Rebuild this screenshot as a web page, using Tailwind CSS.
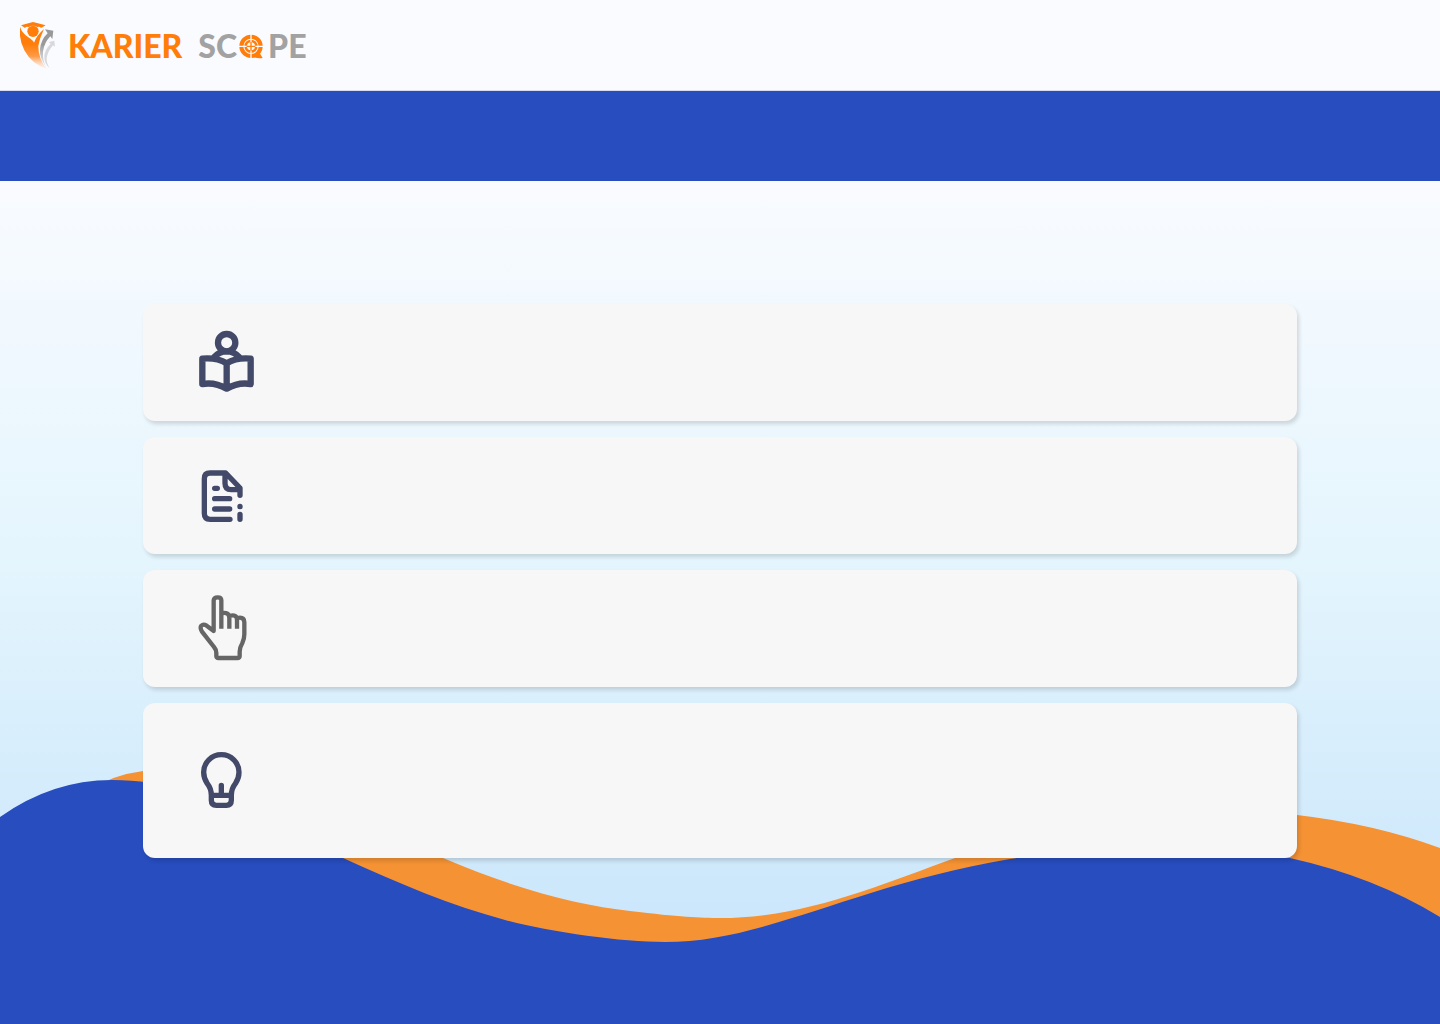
<!DOCTYPE html>
<html lang="en">
<head>
<meta charset="utf-8">
<meta name="viewport" content="width=device-width, initial-scale=1">
<title>Karier Scope</title>
<script src="https://cdn.jsdelivr.net/npm/@tailwindcss/browser@4"></script>
</head>
<body class="flex min-h-screen flex-col bg-[#f9fbff] font-['Lato',sans-serif]">
<header class="flex h-[91px] items-center border-b border-[#d5dcf0] px-5">
  <a href="#" aria-label="Karier Scope" class="flex items-center gap-3">
    <svg class="h-[50px] w-9" viewBox="30 30 108 150" aria-hidden="true">
      <defs>
        <linearGradient id="body" x1="0" y1="0" x2="0" y2="1"><stop offset=".4" stop-color="#ff7d08"/><stop offset=".7" stop-color="#ff9a45"/><stop offset="1" stop-color="#ffd9bb" stop-opacity=".2"/></linearGradient>
        <linearGradient id="arrow" x1="0" y1="0" x2="0" y2="1"><stop offset=".4" stop-color="#999"/><stop offset="1" stop-color="#ccc" stop-opacity=".4"/></linearGradient>
      </defs>
      <path d="M33 46 69 36 107 46 93 54 Q89 48 82 51 Q69 44 56 51 Q48 48 45 54Z" fill="#ff7d08"/>
      <circle cx="69" cy="64" r="17" fill="#ff7d08"/>
      <path d="M30 50 Q35 68 55 82 Q70 92 72 98 Q80 76 102 57 Q89 84 85 107 Q84 145 110 177 Q65 162 43 121 Q26 87 30 50Z" fill="url(#body)"/>
      <path d="M105 58 130 62 127 87 121 79 Q102 99 99 125 Q97 150 109 172 Q88 145 90 118 Q93 88 113 70Z" fill="url(#arrow)"/>
      <path d="M117 96 133 92 135 110 129 106 Q112 126 110 145 Q109 159 119 175 Q103 160 103 142 Q103 119 122 102Z" fill="#d8d8da"/>
    </svg>
    <span class="flex items-center pt-0.5 text-[32px] leading-8 font-black text-[#ff7d08]">
      <span>KARIER</span>
      <span class="ml-4 text-[#a2a2a2]">SC</span>
      <svg class="ml-0.5 h-[25px] w-[25px]" viewBox="0 0 75 75" fill="none" aria-hidden="true">
        <circle cx="36" cy="37" r="29" stroke="#ff7d08" stroke-width="12"/>
        <path d="M58 50 71 72 Q56 74 43 69Z" fill="#ff7d08"/>
        <circle cx="36" cy="37" r="16" stroke="#ff7d08" stroke-width="8"/>
        <path d="M36 0V75M0 37H75" stroke="#f9fbff" stroke-width="4"/>
        <path d="M36 24V50M23 37H49" stroke="#ff7d08" stroke-width="4"/>
      </svg>
      <span class="ml-1 text-[#a2a2a2]">PE</span>
    </span>
  </a>
</header>
<div class="h-[90px] bg-[#274dbf]"></div>
<main class="relative isolate flex-1 bg-linear-to-b from-[#f9fbff] via-[#e4f5fd] via-45% to-[#cae6fb] to-90% px-[143px] pt-[123px] pb-[166px]">
  <svg class="absolute inset-x-0 bottom-0 -z-10 h-[274px] w-full" viewBox="0 750 1440 274" preserveAspectRatio="none" aria-hidden="true">
    <path d="M90 790 Q112 775 143 771 C260 752 340 815 443 858 C520 891 580 905 630 911 C680 917 700 918 720 918 C805 918 880 885 955 858 C1070 810 1190 806 1297 815 Q1375 824 1440 848 V1024H90Z" fill="#f59234"/>
    <path d="M0 817 Q52 780 112 780 C190 780 240 810 343 858 C400 884 450 905 505 920 C550 932 620 942 665 942 C765 942 855 885 1010 859 C1110 842 1210 842 1290 858 Q1375 877 1440 917 V1024H0Z" fill="#274dbf"/>
  </svg>
  <div class="flex flex-col gap-4">
    <section class="flex h-[117px] items-center rounded-xl bg-[#f7f7f7] pl-[55px] shadow-[2px_3px_4px_rgba(0,0,0,0.14)]">
      <svg class="h-[69px] w-14" viewBox="24 24 168 207" fill="none" stroke="#434968" stroke-width="19" stroke-linejoin="round" aria-hidden="true">
        <circle cx="110" cy="68" r="26"/>
        <path d="M72 112Q87 94 110 94T148 112M110 130Q80 112 37 116V192Q76 186 110 206Q144 186 182 192V116Q140 112 110 130V206"/>
      </svg>
    </section>
    <section class="flex h-[117px] items-center rounded-xl bg-[#f7f7f7] pl-[55px] shadow-[2px_3px_4px_rgba(0,0,0,0.14)]">
      <svg class="h-[69px] w-14" viewBox="24 3 168 207" fill="none" stroke="#434968" stroke-width="16" stroke-linecap="round" stroke-linejoin="round" aria-hidden="true">
        <path d="M120 178H60Q43 178 43 160V56Q43 39 60 39H107L150 84V106M105 39V70Q105 89 123 89H150M74 85H82M74 116H119M74 147H119M150 139V140M150 163V178"/>
      </svg>
    </section>
    <section class="flex h-[117px] items-center rounded-xl bg-[#f7f7f7] pl-[55px] shadow-[2px_3px_4px_rgba(0,0,0,0.14)]">
      <svg class="h-[69px] w-14" viewBox="24 27 168 207" fill="none" stroke="#666" stroke-width="13" stroke-linejoin="round" aria-hidden="true">
        <path d="M94 131V46Q94 37 83 37T71 46V138L50 122Q40 116 34 122Q29 128 36 140L72 186Q79 194 79 204V213Q79 219 86 219H142Q149 219 149 213V200Q149 188 157 174Q163 162 163 148V112Q163 98 150 98Q146 98 141 100M94 85Q118 79 118 100V131M118 93Q141 86 141 106V131"/>
      </svg>
    </section>
    <section class="flex h-[155px] items-center rounded-xl bg-[#f7f7f7] pl-[55px] shadow-[2px_3px_4px_rgba(0,0,0,0.14)]">
      <svg class="h-[69px] w-14" viewBox="24 3 168 207" fill="none" stroke="#434968" stroke-width="16" stroke-linecap="round" stroke-linejoin="round" aria-hidden="true">
        <path d="M64 151Q64 131 52 116Q41 100 41 82A53 53 0 0 1 147 82Q147 100 136 116Q124 131 124 151V166Q124 181 109 181H79Q64 181 64 166ZM64 151H124M94 121V151"/>
      </svg>
    </section>
  </div>
</main>
</body>
</html>
